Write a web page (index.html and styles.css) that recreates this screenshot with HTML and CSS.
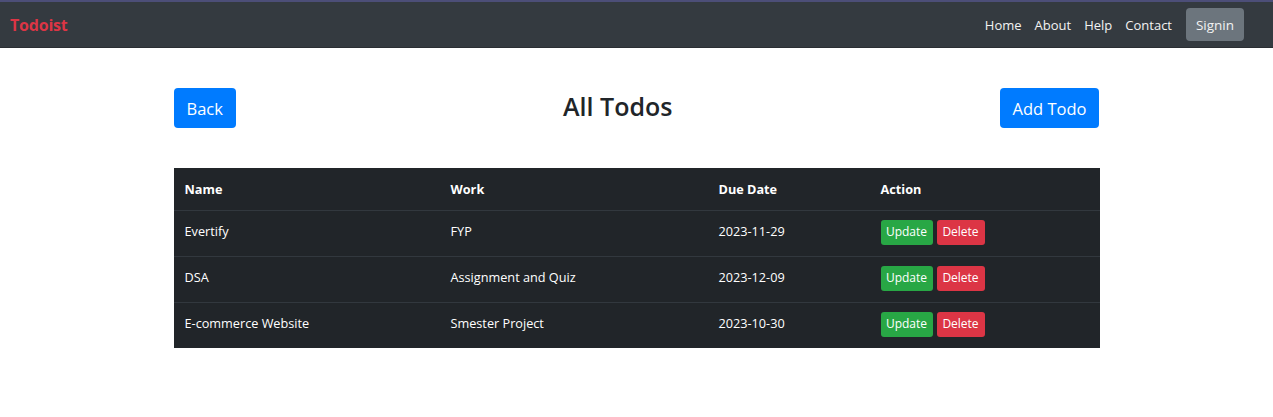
FILE: index.html
```html
<!DOCTYPE html>
<html>
<head>
<meta charset="utf-8">
<link rel="stylesheet" href="styles.css">
</head>
<body>
<nav class="navbar">
  <a class="brand" href="#">Todoist</a>
  <div class="nav-links">
    <a class="nav-link" href="#">Home</a>
    <a class="nav-link" href="#">About</a>
    <a class="nav-link" href="#">Help</a>
    <a class="nav-link" href="#">Contact</a>
    <a class="btn-signin" href="#">Signin</a>
  </div>
</nav>
<main class="container">
  <div class="header-row">
    <a class="btn btn-primary" href="#">Back</a>
    <h2 class="title">All Todos</h2>
    <a class="btn btn-primary" href="#">Add Todo</a>
  </div>
  <table class="todo-table">
    <thead>
      <tr>
        <th class="col-name">Name</th>
        <th class="col-work">Work</th>
        <th class="col-date">Due Date</th>
        <th class="col-action">Action</th>
      </tr>
    </thead>
    <tbody>
      <tr>
        <td>Evertify</td>
        <td>FYP</td>
        <td>2023-11-29</td>
        <td class="actions"><div class="btn-group"><span class="btn-sm btn-success">Update</span><span class="btn-sm btn-danger">Delete</span></div></td>
      </tr>
      <tr>
        <td>DSA</td>
        <td>Assignment and Quiz</td>
        <td>2023-12-09</td>
        <td class="actions"><div class="btn-group"><span class="btn-sm btn-success">Update</span><span class="btn-sm btn-danger">Delete</span></div></td>
      </tr>
      <tr>
        <td>E-commerce Website</td>
        <td>Smester Project</td>
        <td>2023-10-30</td>
        <td class="actions"><div class="btn-group"><span class="btn-sm btn-success">Update</span><span class="btn-sm btn-danger">Delete</span></div></td>
      </tr>
    </tbody>
  </table>
</main>
</body>
</html>
```
FILE: styles.css
```css
* { box-sizing: border-box; }
body {
  margin: 0;
  font-family: "Open Sans", "Noto Sans", sans-serif;
  color: #212529;
  background: #fff;
}
a { text-decoration: none; }
.navbar {
  height: 48px;
  background: #343a40;
  border-top: 2px solid #4c4e78;
  border-bottom: 1px solid #2a2e33;
  display: flex;
  align-items: center;
  justify-content: space-between;
  padding: 0 29px 0 10px;
}
.brand {
  color: #dc3545;
  font-weight: 700;
  font-size: 16px;
  letter-spacing: -0.2px;
}
.nav-links {
  display: flex;
  align-items: center;
  gap: 13px;
}
.nav-link {
  color: #f2f2f2;
  font-size: 13px;
}
.btn-signin {
  margin-left: 1px;
  background: #6c757d;
  color: #f2f2f2;
  font-size: 13.5px;
  border-radius: 4px;
  height: 33px;
  width: 58px;
  display: flex;
  align-items: center;
  justify-content: center;
}
.container {
  width: 926px;
  margin: 0 auto;
}
.header-row {
  margin-top: 40px;
  display: flex;
  align-items: center;
  justify-content: space-between;
}
.btn {
  display: inline-flex;
  align-items: center;
  justify-content: center;
  height: 40px;
  padding: 0 13px;
  border-radius: 4px;
  font-size: 16.5px;
  color: #fff;
}
.btn-primary { background: #007bff; }
.title {
  margin: 0;
  font-size: 25px;
  font-weight: 600;
  color: #212529;
  position: relative;
  top: -2px;
}
.todo-table {
  margin-top: 40px;
  width: 926px;
  border-collapse: collapse;
  background: #212529;
  color: #fff;
  font-size: 12.7px;
  table-layout: fixed;
}
.todo-table th,
.todo-table td {
  text-align: left;
  padding: 0 11px;
  line-height: 18px;
}
.todo-table th {
  height: 42px;
  font-weight: 700;
  vertical-align: middle;
}
.todo-table td {
  height: 46px;
  border-top: 1px solid #32383e;
  vertical-align: top;
  padding-top: 11px;
}
.todo-table td.actions { padding-top: 9px; }
.col-name { width: 266px; }
.col-work { width: 268px; }
.col-date { width: 162px; }
.btn-group {
  display: flex;
  gap: 4px;
}
.btn-sm {
  display: inline-flex;
  align-items: center;
  justify-content: center;
  height: 25px;
  border-radius: 3px;
  font-size: 12px;
  color: #fff;
}
.btn-success { background: #28a745; width: 52px; }
.btn-danger { background: #dc3545; width: 48px; }
```
